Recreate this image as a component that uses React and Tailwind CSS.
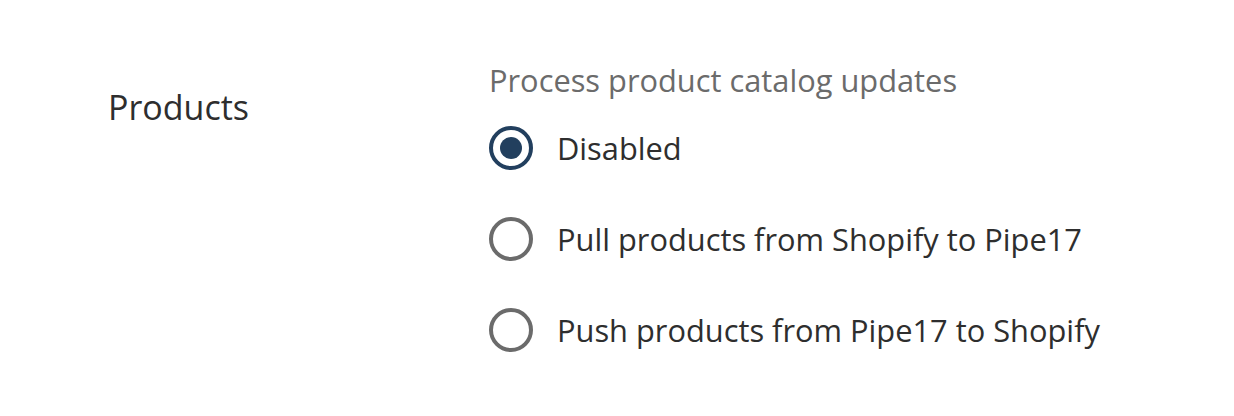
import { useState } from 'react'

const options = [
  { id: 'disabled', label: 'Disabled' },
  { id: 'pull', label: 'Pull products from Shopify to Pipe17' },
  { id: 'push', label: 'Push products from Pipe17 to Shopify' },
]

function Radio({ checked }) {
  return (
    <span
      className={`flex h-[44px] w-[44px] shrink-0 items-center justify-center rounded-full border-[4px] ${
        checked ? 'border-[#223f5e]' : 'border-[#6b6b6b]'
      }`}
    >
      {checked && <span className="h-[22px] w-[22px] rounded-full bg-[#223f5e]" />}
    </span>
  )
}

export default function App() {
  const [value, setValue] = useState('disabled')

  return (
    <div className="min-h-[416px] bg-white font-['Open_Sans','Noto_Sans',sans-serif] text-[#2e2e2e]">
      <div className="flex pl-[108px] pt-[60px]">
        <div className="w-[381px] pt-[26px] text-[34px] leading-[42px]">Products</div>
        <div className="flex flex-col">
          <div className="text-[30.8px] leading-[40px] text-[#6b6b6b]">Process product catalog updates</div>
          <div className="mt-[26px] flex flex-col gap-[47px]">
            {options.map((o) => (
              <label
                key={o.id}
                className="flex cursor-pointer items-center gap-[24px]"
                onClick={() => setValue(o.id)}
              >
                <Radio checked={value === o.id} />
                <span className="text-[30.8px] leading-[44px]">{o.label}</span>
              </label>
            ))}
          </div>
        </div>
      </div>
    </div>
  )
}
